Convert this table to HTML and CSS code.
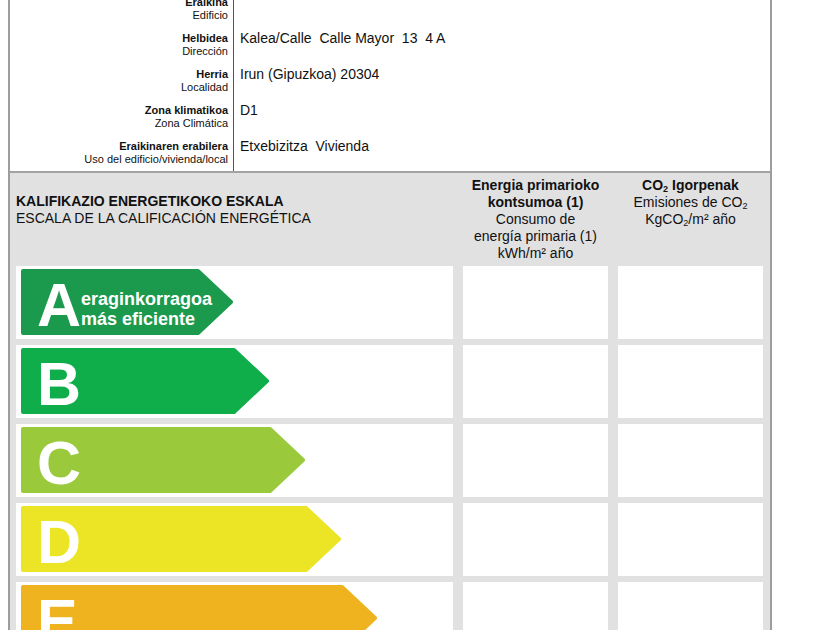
FILE: index.html
```html
<!DOCTYPE html>
<html lang="es">
<head>
<meta charset="utf-8">
<title>Kalifikazio energetikoa</title>
<link rel="stylesheet" href="styles.css">
</head>
<body>
<div class="sheet">
  <section class="info">
    <div class="row">
      <div class="label"><b>Eraikina</b><span>Edificio</span></div>
      <div class="value"></div>
    </div>
    <div class="row">
      <div class="label"><b>Helbidea</b><span>Dirección</span></div>
      <div class="value">Kalea/Calle  Calle Mayor  13  4 A</div>
    </div>
    <div class="row">
      <div class="label"><b>Herria</b><span>Localidad</span></div>
      <div class="value">Irun (Gipuzkoa) 20304</div>
    </div>
    <div class="row">
      <div class="label"><b>Zona klimatikoa</b><span>Zona Climática</span></div>
      <div class="value">D1</div>
    </div>
    <div class="row">
      <div class="label"><b>Eraikinaren erabilera</b><span>Uso del edificio/vivienda/local</span></div>
      <div class="value">Etxebizitza  Vivienda</div>
    </div>
  </section>

  <section class="scale">
    <div class="head head-title">
      <b>KALIFIKAZIO ENERGETIKOKO ESKALA</b>
      <span>ESCALA DE LA CALIFICACIÓN ENERGÉTICA</span>
    </div>
    <div class="head head-col">
      <b>Energia primarioko</b>
      <b>kontsumoa (1)</b>
      <span>Consumo de</span>
      <span>energía primaria (1)</span>
      <span>kWh/m² año</span>
    </div>
    <div class="head head-col">
      <b>CO<sub>2</sub> Igorpenak</b>
      <span>Emisiones de CO<sub>2</sub></span>
      <span>KgCO<sub>2</sub>/m² año</span>
    </div>

    <div class="cell cell-bar">
      <div class="bar bar-a">
        <svg class="shape" width="212" height="66" viewBox="0 0 212 66"><polygon points="2,2 177,2 210,33 177,64 2,64"/></svg>
        <div class="bar-label"><span class="letter">A</span><span class="note">eraginkorragoa<br>más eficiente</span></div>
      </div>
    </div>
    <div class="cell"></div>
    <div class="cell"></div>

    <div class="cell cell-bar">
      <div class="bar bar-b">
        <svg class="shape" width="248" height="66" viewBox="0 0 248 66"><polygon points="2,2 213,2 246,33 213,64 2,64"/></svg>
        <div class="bar-label"><span class="letter">B</span></div>
      </div>
    </div>
    <div class="cell"></div>
    <div class="cell"></div>

    <div class="cell cell-bar">
      <div class="bar bar-c">
        <svg class="shape" width="284" height="66" viewBox="0 0 284 66"><polygon points="2,2 249,2 282,33 249,64 2,64"/></svg>
        <div class="bar-label"><span class="letter">C</span></div>
      </div>
    </div>
    <div class="cell"></div>
    <div class="cell"></div>

    <div class="cell cell-bar">
      <div class="bar bar-d">
        <svg class="shape" width="320" height="66" viewBox="0 0 320 66"><polygon points="2,2 285,2 318,33 285,64 2,64"/></svg>
        <div class="bar-label"><span class="letter">D</span></div>
      </div>
    </div>
    <div class="cell"></div>
    <div class="cell"></div>

    <div class="cell cell-bar">
      <div class="bar bar-e">
        <svg class="shape" width="356" height="66" viewBox="0 0 356 66"><polygon points="2,2 321,2 354,33 321,64 2,64"/></svg>
        <div class="bar-label"><span class="letter">E</span></div>
      </div>
    </div>
    <div class="cell"></div>
    <div class="cell"></div>

    <div class="cell cell-bar">
      <div class="bar bar-f">
        <svg class="shape" width="392" height="66" viewBox="0 0 392 66"><polygon points="2,2 357,2 390,33 357,64 2,64"/></svg>
        <div class="bar-label"><span class="letter">F</span></div>
      </div>
    </div>
    <div class="cell"></div>
    <div class="cell"></div>

    <div class="cell cell-bar">
      <div class="bar bar-g">
        <svg class="shape" width="428" height="66" viewBox="0 0 428 66"><polygon points="2,2 393,2 426,33 393,64 2,64"/></svg>
        <div class="bar-label"><span class="letter">G</span><span class="note">ez hain eraginkorra<br>menos eficiente</span></div>
      </div>
    </div>
    <div class="cell"></div>
    <div class="cell"></div>
  </section>
</div>
</body>
</html>
```

FILE: styles.css
```css
html, body {
  margin: 0;
  padding: 0;
  background: #ffffff;
}

body {
  font-family: "Liberation Sans", Arial, sans-serif;
  color: #111111;
}

.sheet {
  box-sizing: border-box;
  width: 764px;
  margin-left: 8px;
  margin-top: -9px;
  border-left: 2px solid #9d9d9d;
  border-right: 2px solid #9d9d9d;
  background: #ffffff;
}

/* ---------- info rows ---------- */
.info {
  display: flex;
  flex-direction: column;
  border-bottom: 2px solid #a3a3a3;
}

.row {
  display: grid;
  grid-template-columns: 224px 1fr;
  height: 36px;
}

.label {
  box-sizing: border-box;
  border-right: 1px solid #555555;
  padding: 5px 5px 0 0;
  text-align: right;
  font-size: 11px;
  line-height: 12.5px;
  display: flex;
  flex-direction: column;
  align-items: flex-end;
}

.label b {
  font-weight: bold;
}

.value {
  padding: 3px 0 0 6px;
  font-size: 14px;
  line-height: 16px;
  white-space: pre;
}

/* ---------- scale ---------- */
.scale {
  display: grid;
  grid-template-columns: 437px 145px 145px;
  grid-template-rows: 87px;
  grid-auto-rows: 73px;
  column-gap: 10px;
  row-gap: 6px;
  padding: 0 7px 0 6px;
  background: #e1e1e1;
}

.head {
  display: flex;
  flex-direction: column;
  font-size: 14px;
  line-height: 17px;
  box-sizing: border-box;
}

.head-title {
  padding-top: 20px;
}

.head-col {
  padding-top: 4px;
  align-items: center;
  text-align: center;
}

sub {
  font-size: 9px;
  line-height: 0;
  vertical-align: -2px;
}

.cell {
  background: #ffffff;
}

.cell-bar {
  box-sizing: border-box;
  padding: 3px 0 0 5px;
}

.bar {
  display: grid;
  height: 66px;
  width: max-content;
}

.shape,
.bar-label {
  grid-area: 1 / 1;
}

.shape polygon {
  stroke-width: 4;
  stroke-linejoin: round;
}

.bar-a polygon { fill: #1b9a4e; stroke: #1b9a4e; }
.bar-b polygon { fill: #10ae4b; stroke: #10ae4b; }
.bar-c polygon { fill: #9aca3c; stroke: #9aca3c; }
.bar-d polygon { fill: #ebe525; stroke: #ebe525; }
.bar-e polygon { fill: #eeb31f; stroke: #eeb31f; }
.bar-f polygon { fill: #e5722b; stroke: #e5722b; }
.bar-g polygon { fill: #e22a2a; stroke: #e22a2a; }

.bar-label {
  display: flex;
  align-items: center;
  padding-left: 16px;
  color: #ffffff;
  font-weight: bold;
}

.letter {
  font-size: 61px;
  line-height: 1;
  padding-top: 6px;
}

.note {
  font-size: 18px;
  line-height: 20px;
  padding-top: 12px;
}
```
